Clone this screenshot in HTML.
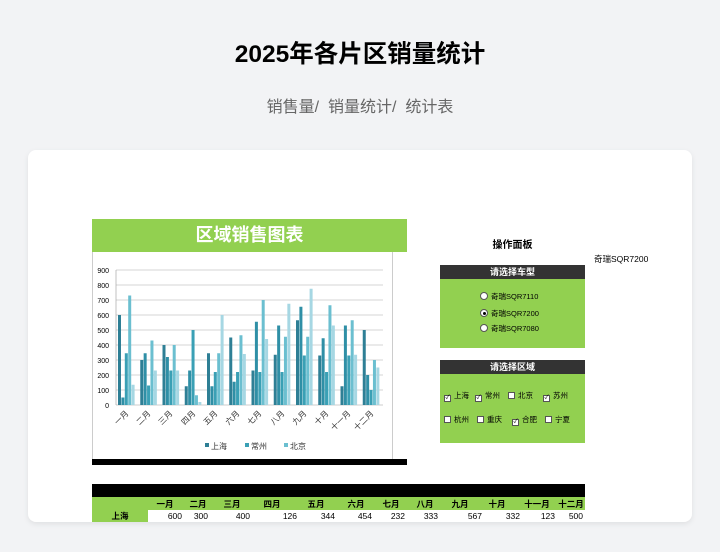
<!DOCTYPE html>
<html><head><meta charset="utf-8"><style>
*{margin:0;padding:0;box-sizing:border-box}
body{width:720px;height:552px;background:#f2f3f5;font-family:"Liberation Sans","Noto Sans CJK SC",sans-serif;position:relative;overflow:hidden}
.a{position:absolute}
h1{position:absolute;top:35px;left:0;width:720px;text-align:center;font-size:24.5px;font-weight:bold;color:#000}
.sub{top:93px;left:0;width:720px;text-align:center;font-size:16px;color:#666}
.card{left:28px;top:150px;width:664px;height:372px;background:#fff;border-radius:8px;overflow:hidden;box-shadow:0 2px 6px rgba(0,0,0,0.08)}
.g{background:#92d050}
.hd{background:#333;color:#fff;font-size:9px;font-weight:bold;text-align:center;line-height:14px}
.t{font-size:7.5px;color:#000;white-space:nowrap;line-height:9px}
.cb{display:inline-block;width:7px;height:7px;border:1px solid #555;background:#fff;vertical-align:-1px;margin-right:3px;font-size:6px;line-height:5px;text-align:center}
.rb{display:inline-block;width:8px;height:8px;border:1px solid #555;border-radius:50%;background:#fff;vertical-align:-1px;margin-right:3px;position:relative}
.tc{font-size:8.5px;font-weight:bold;text-align:center;width:40px;margin-left:-20px}
.tv{font-size:8.5px;text-align:right}
</style></head><body>
<h1>2025年各片区销量统计</h1>
<div class="a sub">销售量/&nbsp; 销量统计/&nbsp; 统计表</div>
<div class="a card"></div>
<div class="a g" style="left:92px;top:219px;width:315px;height:33px;color:#fff;font-size:18px;font-weight:bold;text-align:center;line-height:33px">区域销售图表</div>
<div class="a" style="left:92px;top:252px;width:301px;height:208px;border:1px solid #ccc;border-top:none"></div>
<div class="a" style="left:92px;top:459px;width:315px;height:6px;background:#000"></div>
<svg class="a" style="left:0;top:0" width="720" height="552" id="ch">
<g font-size="7" font-family="Liberation Sans" fill="#000" text-anchor="end">
<text x="109" y="273">900</text><text x="109" y="288">800</text><text x="109" y="303">700</text><text x="109" y="318">600</text><text x="109" y="333">500</text><text x="109" y="348">400</text><text x="109" y="363">300</text><text x="109" y="378">200</text><text x="109" y="393">100</text><text x="109" y="408">0</text>
</g>
<g id="bars"></g>
<g font-size="8" font-family="Liberation Sans,Noto Sans CJK SC" fill="#333" text-anchor="end">
<text transform="translate(129,414) rotate(-45)">一月</text>
<text transform="translate(151,414) rotate(-45)">二月</text>
<text transform="translate(173,414) rotate(-45)">三月</text>
<text transform="translate(196,414) rotate(-45)">四月</text>
<text transform="translate(218,414) rotate(-45)">五月</text>
<text transform="translate(240,414) rotate(-45)">六月</text>
<text transform="translate(262,414) rotate(-45)">七月</text>
<text transform="translate(285,414) rotate(-45)">八月</text>
<text transform="translate(307,414) rotate(-45)">九月</text>
<text transform="translate(329,414) rotate(-45)">十月</text>
<text transform="translate(351,414) rotate(-45)">十一月</text>
<text transform="translate(374,414) rotate(-45)">十二月</text>
</g>
<g font-size="8" font-family="Liberation Sans,Noto Sans CJK SC" fill="#333">
<rect x="205" y="443" width="4" height="4" fill="#2e7f95"/><text x="211" y="449">上海</text>
<rect x="245" y="443" width="4" height="4" fill="#3aa0b5"/><text x="251" y="449">常州</text>
<rect x="284" y="443" width="4" height="4" fill="#6bbfd0"/><text x="290" y="449">北京</text>
</g>
</svg>
<div class="a" style="left:470px;top:236px;width:85px;text-align:center;font-size:10px;font-weight:bold">操作面板</div>
<div class="a t" style="left:594px;top:255px;font-size:8.5px">奇瑞SQR7200</div>
<div class="a hd" style="left:440px;top:265px;width:145px">请选择车型</div>
<div class="a g" style="left:440px;top:279px;width:145px;height:69px"></div>
<div class="a t" style="left:480px;top:292px"><span class="rb"></span>奇瑞SQR7110</div>
<div class="a t" style="left:480px;top:309px"><span class="rb"><span style="position:absolute;left:1.5px;top:1.5px;width:3px;height:3px;border-radius:50%;background:#000"></span></span>奇瑞SQR7200</div>
<div class="a t" style="left:480px;top:324px"><span class="rb"></span>奇瑞SQR7080</div>
<div class="a hd" style="left:440px;top:360px;width:145px">请选择区域</div>
<div class="a g" style="left:440px;top:374px;width:145px;height:69px"></div>
<div class="a t" style="left:444px;top:391px"><span class="cb">✓</span>上海</div>
<div class="a t" style="left:475px;top:391px"><span class="cb">✓</span>常州</div>
<div class="a t" style="left:508px;top:391px"><span class="cb"></span>北京</div>
<div class="a t" style="left:543px;top:391px"><span class="cb">✓</span>苏州</div>
<div class="a t" style="left:444px;top:415px"><span class="cb"></span>杭州</div>
<div class="a t" style="left:477px;top:415px"><span class="cb"></span>重庆</div>
<div class="a t" style="left:512px;top:415px"><span class="cb">✓</span>合肥</div>
<div class="a t" style="left:545px;top:415px"><span class="cb"></span>宁夏</div>
<div class="a" style="left:92px;top:484px;width:493px;height:13px;background:#000"></div>
<div class="a g" style="left:92px;top:497px;width:493px;height:13px"></div>
<div class="a g" style="left:92px;top:510px;width:56px;height:12px;font-size:8.5px;font-weight:bold;text-align:center;line-height:12px">上海</div>
<div id="tbl"></div>
<script>
var d=[[600,50,345,730,135],[300,345,130,430,230],[400,320,230,400,230],[125,230,500,65,20],[345,125,220,345,600],[450,155,220,465,340],[230,555,220,700,440],[335,530,220,455,675],[565,655,330,455,775],[330,445,220,665,530],[125,530,330,565,335],[500,200,100,300,250]];
var c=['#2e7f95','#2f8fa6','#3aa0b5','#6bbfd0','#a6d7e3'];
var s='<line x1="116" x2="383" y1="405" y2="405" stroke="#999" stroke-width="0.6"/>';
for(var k=1;k<=9;k++){var y=405-k*15;s+='<line x1="116" x2="383" y1="'+y+'" y2="'+y+'" stroke="#aaa" stroke-width="0.5"/>';}
s+='<line x1="116" x2="116" y1="270" y2="405" stroke="#999" stroke-width="0.6"/>';
for(var i=0;i<12;i++)for(var j=0;j<5;j++){var h=d[i][j]*0.15,x=116+i*22.25+2+j*3.4;s+='<rect x="'+x+'" y="'+(405-h)+'" width="3" height="'+h+'" fill="'+c[j]+'"/>';}
document.getElementById('bars').innerHTML=s;
var m=['一月','二月','三月','四月','五月','六月','七月','八月','九月','十月','十一月','十二月'],cx=[165,198,232,272,316,356,391,425,460,497,537,571],v=[600,300,400,126,344,454,232,333,567,332,123,500],r=[182,208,250,297,335,372,405,438,482,520,555,583],t='';
for(var i=0;i<12;i++){t+='<div class="a tc" style="left:'+cx[i]+'px;top:498px">'+m[i]+'</div>';t+='<div class="a tv" style="left:'+(r[i]-30)+'px;width:30px;top:511px">'+v[i]+'</div>';}
document.getElementById('tbl').innerHTML=t;
</script>
</body></html>
